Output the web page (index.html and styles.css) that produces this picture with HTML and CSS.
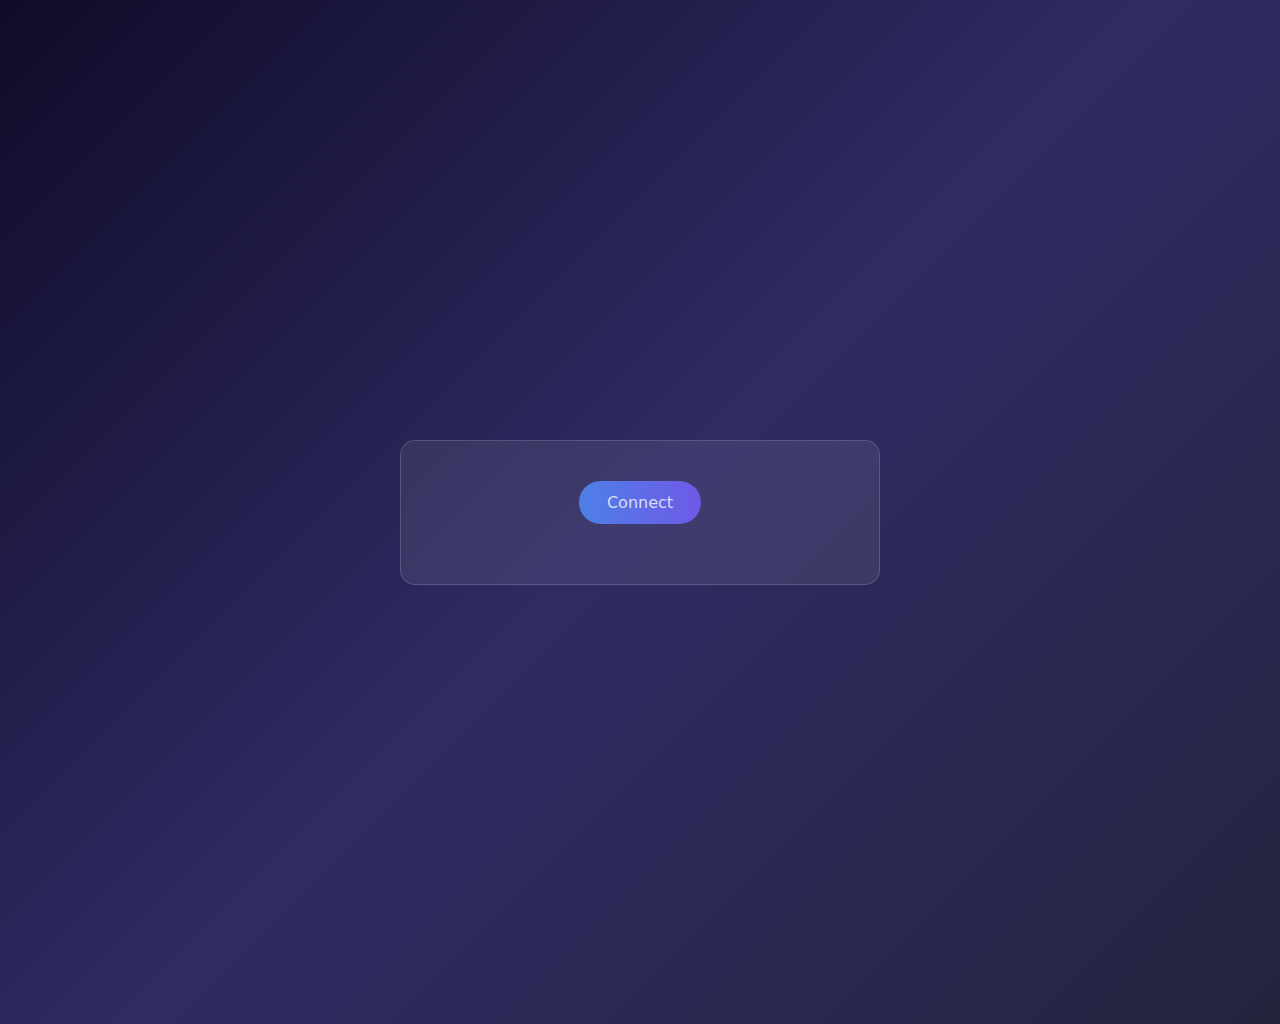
FILE: index.html
```html
<!DOCTYPE html>
<html lang="en">
<head>
<meta charset="utf-8">
<title>Connect</title>
<link rel="stylesheet" href="styles.css">
</head>
<body>
<main class="card">
  <button class="connect-btn" type="button">Connect</button>
  <div class="status"></div>
</main>
</body>
</html>
```
FILE: styles.css
```css
html, body {
  margin: 0;
  padding: 0;
  height: 100%;
}
body {
  min-height: 100vh;
  display: flex;
  align-items: center;
  justify-content: center;
  background: linear-gradient(135deg, #0f0c29 0%, #302b63 50%, #24243e 100%);
  font-family: "DejaVu Sans", sans-serif;
}
.card {
  width: 478px;
  box-sizing: content-box;
  padding: 40px 0;
  display: flex;
  flex-direction: column;
  align-items: center;
  background: rgba(255, 255, 255, 0.08);
  border: 1px solid rgba(255, 255, 255, 0.16);
  border-radius: 15px;
}
.connect-btn {
  height: 43px;
  padding: 0 28px;
  border: none;
  border-radius: 22px;
  background: linear-gradient(90deg, #4d80e7 0%, #6f59e7 100%);
  color: #d9dbf5;
  font-family: "DejaVu Sans", sans-serif;
  font-size: 16px;
  cursor: pointer;
}
.status {
  height: 20px;
}
```
